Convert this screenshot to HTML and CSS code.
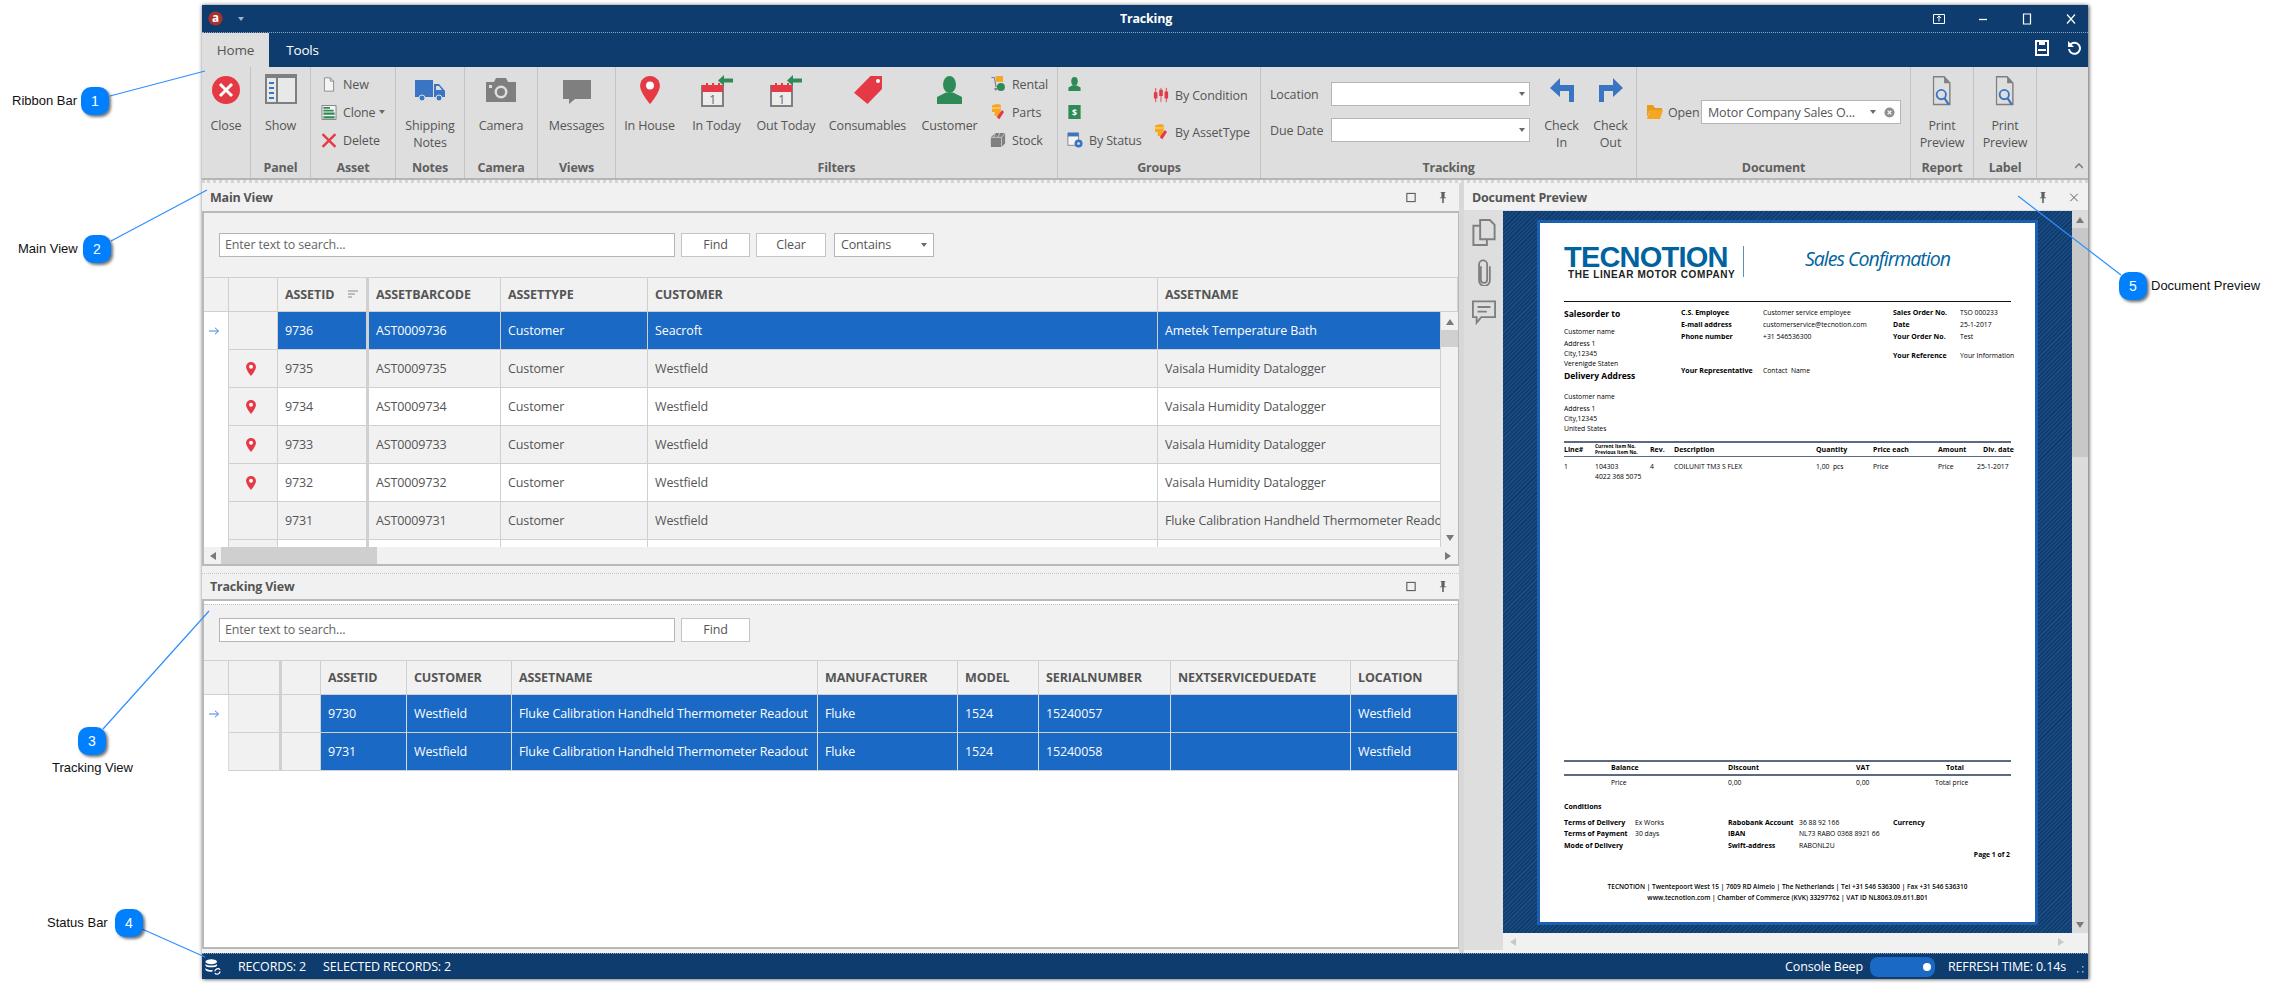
FILE: index.html
```html
<!DOCTYPE html>
<html lang="en">
<head>
<meta charset="utf-8">
<title>Tracking</title>
<link rel="stylesheet" href="styles.css">
</head>
<body>
<svg class="sprite" aria-hidden="true">
  <symbol id="i-pin" viewBox="0 0 24 34"><path d="M12 0C5 0 0 5.400 0 12c0 8 12 22 12 22s12-14 12-22C24 5.400 19 0 12 0z" fill="#e63946"/><circle cx="12" cy="11.500" r="4.800" fill="#fff"/></symbol>
  <symbol id="i-doc-q" viewBox="0 0 26 42"><path d="M1 1h15l8 9v30H1z" fill="none" stroke="#7f7f7f" stroke-width="2"/><path d="M16 1l8 9h-8z" fill="#7f7f7f"/><circle cx="12" cy="26" r="6.500" fill="none" stroke="#3a75c4" stroke-width="2.600"/><path d="M16.500 31l6 9" stroke="#3a75c4" stroke-width="3"/></symbol>
  <symbol id="i-person" viewBox="0 0 25 28"><ellipse cx="12.500" cy="8.500" rx="6.500" ry="8.500" fill="#2e8b57"/><path d="M0 28v-7l9-4.500h7l9 4.500v7z" fill="#2e8b57"/></symbol>
  <symbol id="i-parts" viewBox="0 0 18 24"><path d="M0 2l8-2 5 1v11H0z" fill="#f5a623"/><path d="M0 5h12v2H0z" fill="#ffd27a"/><path d="M4 12h9v6H4z" fill="#f5a623"/><path d="M15 9l3 3-7 11-4-3z" fill="#e63946"/></symbol>
  <symbol id="i-box" viewBox="0 0 12 12"><path d="M1 1h10v10H1z" fill="none" stroke="#606060" stroke-width="1.400"/></symbol>
  <symbol id="i-tack" viewBox="0 0 10 14"><path d="M2 0h6v1H7v6h2v1H6v6H4V8H1V7h2V1H2z" fill="#606060"/></symbol>
</svg>

<div class="label l1">Ribbon Bar</div>
<div class="label l2">Main View</div>
<div class="label l3">Tracking View</div>
<div class="label l4">Status Bar</div>
<div class="label l5">Document Preview</div>

<div class="window">
  <header class="titlebar">
    <div class="tb-left">
      <svg class="logo" viewBox="0 0 18 18"><circle cx="9" cy="9" r="8.500" fill="#a8322d"/><text x="9" y="13.500" class="logo-a">a</text></svg>
      <svg class="caret-w" viewBox="0 0 6 4"><path d="M0 0h6L3 4z" fill="#9fb4cc"/></svg>
    </div>
    <div class="tb-title">Tracking</div>
    <div class="tb-right">
      <svg class="wbtn" viewBox="0 0 12 12"><path d="M.5 1.500h11v9H.5z" fill="none" stroke="#fff"/><path d="M6 2.500v6M4 5l2-2 2 2" fill="none" stroke="#fff"/></svg>
      <svg class="wbtn" viewBox="0 0 12 12"><path d="M2 6.500h8" stroke="#fff" stroke-width="1.300"/></svg>
      <svg class="wbtn" viewBox="0 0 12 12"><path d="M2.500 1h7v10h-7z" fill="none" stroke="#fff" stroke-width="1.200"/></svg>
      <svg class="wbtn" viewBox="0 0 12 12"><path d="M2 1.500l8 9M10 1.500l-8 9" stroke="#fff" stroke-width="1.200"/></svg>
    </div>
  </header>

  <nav class="tabrow">
    <div class="tab active">Home</div>
    <div class="tab">Tools</div>
    <div class="qat">
      <svg class="qat-i" viewBox="0 0 14 16"><path d="M1 1h12v14H1z" fill="none" stroke="#fff" stroke-width="2"/><path d="M4 1h6v4H4zM3 9h8v2H3z" fill="#fff"/></svg>
      <svg class="qat-i" viewBox="0 0 14 16"><path d="M3.500 4.500A5.500 5.500 0 1 1 2 9" fill="none" stroke="#fff" stroke-width="2"/><path d="M1 1v6h6z" fill="#fff"/></svg>
    </div>
  </nav>

  <section class="ribbon">
    <div class="group w-close">
      <div class="g-body">
        <div class="big">
          <svg class="ic28" viewBox="0 0 28 28"><circle cx="14" cy="14" r="14" fill="#e63946"/><path d="M8 8l12 12M20 8L8 20" stroke="#fff" stroke-width="3"/></svg>
          <span>Close</span>
        </div>
      </div>
      <div class="g-cap"></div>
    </div>
    <div class="group w-panel">
      <div class="g-body">
        <div class="big">
          <svg class="ic30" viewBox="0 0 32 30"><path d="M0 0h32v30H0z" fill="#7f7f7f"/><path d="M2 4h9v24H2zM13 4h17v24H13z" fill="#e8e8e8"/><path d="M4 8h5v2H4zM4 13h5v2H4zM4 18h5v2H4zM4 23h5v2H4z" fill="#3a75c4"/></svg>
          <span>Show</span>
        </div>
      </div>
      <div class="g-cap">Panel</div>
    </div>
    <div class="group w-asset">
      <div class="g-body stack asset-stack">
        <div class="small"><svg class="ic-sm" viewBox="0 0 14 18"><path d="M1.500 1h7l4 4v12h-11z" fill="#f4f4f4" stroke="#7f7f7f"/><path d="M8.500 1v4h4" fill="none" stroke="#7f7f7f"/></svg><span>New</span></div>
        <div class="small"><svg class="ic-sm" viewBox="0 0 16 16"><path d="M.5 .5h15v15H.5z" fill="#f4f4f4" stroke="#7f7f7f"/><path d="M2 2h7v2H2zM2 5h11v2H2zM2 8h12v2.500H2zM2 12h12v2.500H2z" fill="#2e8b57"/></svg><span>Clone</span><i class="caret"></i></div>
        <div class="small"><svg class="ic-sm" viewBox="0 0 14 14"><path d="M1 1l12 12M13 1L1 13" stroke="#e63946" stroke-width="2.200"/></svg><span>Delete</span></div>
      </div>
      <div class="g-cap">Asset</div>
    </div>
    <div class="group w-notes">
      <div class="g-body">
        <div class="big">
          <svg class="ic28 wide" viewBox="0 0 30 28"><path d="M0 4h18v17H0zM19 8h5l6 7v6H19z" fill="#3a75c4"/><path d="M21 10h3l3 4h-6z" fill="#dedede"/><circle cx="7" cy="22" r="3" fill="#3a75c4" stroke="#dedede"/><circle cx="24" cy="22" r="3" fill="#3a75c4" stroke="#dedede"/></svg>
          <span>Shipping<br>Notes</span>
        </div>
      </div>
      <div class="g-cap">Notes</div>
    </div>
    <div class="group w-camera">
      <div class="g-body">
        <div class="big">
          <svg class="ic28 wide" viewBox="0 0 30 28"><path d="M0 6h8l2-4h10l2 4h8v20H0z" fill="#7f7f7f"/><circle cx="15" cy="16" r="6.500" fill="#dedede"/><circle cx="15" cy="16" r="4" fill="#7f7f7f"/><path d="M3 9h3v3H3z" fill="#dedede"/></svg>
          <span>Camera</span>
        </div>
      </div>
      <div class="g-cap">Camera</div>
    </div>
    <div class="group w-views">
      <div class="g-body">
        <div class="big">
          <svg class="ic28 wide" viewBox="0 0 30 28"><path d="M1 4h28v19H13l-6 5v-5H1z" fill="#7f7f7f"/></svg>
          <span>Messages</span>
        </div>
      </div>
      <div class="g-cap">Views</div>
    </div>
    <div class="group w-filters">
      <div class="g-body row-body">
        <div class="big b67">
          <svg class="ic28" viewBox="0 0 24 34"><use href="#i-pin"/></svg>
          <span>In House</span>
        </div>
        <div class="big b67">
          <svg class="ic-cal" viewBox="0 0 32 32"><path d="M1 11h21v20H1z" fill="#ececec" stroke="#7f7f7f" stroke-width="2"/><path d="M1 10h21v7H1z" fill="#e63946"/><path d="M5 8h2v5H5zM11 8h2v5h-2zM17 8h2v5h-2z" fill="#e63946"/><text x="11.500" y="29" class="cal-num">1</text><path d="M17 5.500L23 0v3.500h9v4h-9V11z" fill="#2e8b57"/></svg>
          <span>In Today</span>
        </div>
        <div class="big b72">
          <svg class="ic-cal" viewBox="0 0 32 32"><path d="M1 11h21v20H1z" fill="#ececec" stroke="#7f7f7f" stroke-width="2"/><path d="M1 10h21v7H1z" fill="#e63946"/><path d="M5 8h2v5H5zM11 8h2v5h-2zM17 8h2v5h-2z" fill="#e63946"/><text x="11.500" y="29" class="cal-num">1</text><path d="M17 5.500L23 0v3.500h9v4h-9V11z" fill="#2e8b57"/></svg>
          <span>Out Today</span>
        </div>
        <div class="big b91">
          <svg class="ic28" viewBox="0 0 28 28"><path d="M16.500 0H28v13L13.500 28 0 16.700z" fill="#e63946"/><circle cx="24" cy="5" r="2" fill="#fff"/></svg>
          <span>Consumables</span>
        </div>
        <div class="big b73">
          <svg class="ic-p-lg" viewBox="0 0 25 28"><use href="#i-person"/></svg>
          <span>Customer</span>
        </div>
        <div class="stack filter-stack">
          <div class="small"><svg class="ic-xs" viewBox="0 0 18 22"><path d="M0 2h4l2 12h8" fill="none" stroke="#7f7f7f" stroke-width="1.500"/><path d="M6 0h10v8H6z" fill="#f5a623"/><circle cx="13" cy="15" r="5.500" fill="#2e8b57"/><circle cx="6" cy="18" r="2" fill="#7f7f7f"/></svg><span>Rental</span></div>
          <div class="small"><svg class="ic-xs" viewBox="0 0 18 24"><use href="#i-parts"/></svg><span>Parts</span></div>
          <div class="small"><svg class="ic-xs" viewBox="0 0 18 18"><path d="M1 6l5-5h11v12l-4 4H1z" fill="#7f7f7f"/><path d="M1 6h12v11M13 6l4-5M6 1L4 6M11 1L9 6" fill="none" stroke="#dedede" stroke-width=".8"/></svg><span>Stock</span></div>
        </div>
      </div>
      <div class="g-cap">Filters</div>
    </div>
    <div class="group w-groups">
      <div class="g-body groups-body">
        <div class="stack groups-left">
          <div class="small"><svg class="ic-p" viewBox="0 0 25 28"><use href="#i-person"/></svg></div>
          <div class="small"><svg class="ic-p" viewBox="0 0 14 16"><path d="M0 0h14v16H0z" fill="#2e8b57"/><text x="7" y="12" class="dollar">$</text></svg></div>
          <div class="small"><svg class="ic-xs" viewBox="0 0 18 18"><path d="M1 1h12v14H1z" fill="#f4f4f4" stroke="#7f7f7f"/><path d="M1 1h12v4H1z" fill="#3a75c4"/><circle cx="13" cy="13" r="4.500" fill="#3a75c4"/><circle cx="13" cy="13" r="1.600" fill="#dedede"/></svg><span>By Status</span></div>
        </div>
        <div class="stack groups-right">
          <div class="small"><svg class="ic-xs" viewBox="0 0 18 16"><path d="M3 0v16M9 0v16M15 0v16" stroke="#e63946"/><path d="M1 5h4v7H1zM7 2h4v7H7zM13 4h4v8h-4z" fill="#e63946"/></svg><span>By Condition</span></div>
          <div class="small"><svg class="ic-xs" viewBox="0 0 18 24"><use href="#i-parts"/></svg><span>By AssetType</span></div>
        </div>
      </div>
      <div class="g-cap">Groups</div>
    </div>
    <div class="group w-tracking">
      <div class="g-body tracking-body">
        <div class="form">
          <div class="form-row"><span class="form-l">Location</span><div class="combo c-loc"><i class="caret"></i></div></div>
          <div class="form-row"><span class="form-l">Due Date</span><div class="combo c-loc"><i class="caret"></i></div></div>
        </div>
        <div class="big b49">
          <svg class="ic-arrow" viewBox="0 0 24 24"><path d="M10 0L0 10l10 9v-6h9v11h5V7H10z" fill="#3a75c4"/></svg>
          <span>Check<br>In</span>
        </div>
        <div class="big b49">
          <svg class="ic-arrow" viewBox="0 0 24 24"><path d="M14 0l10 10-10 9v-6H5v11H0V7h14z" fill="#3a75c4"/></svg>
          <span>Check<br>Out</span>
        </div>
      </div>
      <div class="g-cap">Tracking</div>
    </div>
    <div class="group w-document">
      <div class="g-body doc-body">
        <svg class="folder" viewBox="0 0 16 14"><path d="M0 0h6l2 3h7v2H3L0 12z" fill="#e89b1a"/><path d="M3 5h13l-3 9H0z" fill="#f5a623"/></svg>
        <span class="open">Open</span>
        <div class="combo c-doc"><span class="c-text">Motor Company Sales O...</span><i class="caret"></i><svg class="clear" viewBox="0 0 12 12"><circle cx="6" cy="6" r="5.500" fill="#8f8f8f"/><path d="M4 4l4 4M8 4l-4 4" stroke="#fff" stroke-width="1.300"/></svg></div>
      </div>
      <div class="g-cap">Document</div>
    </div>
    <div class="group w-report">
      <div class="g-body">
        <div class="big">
          <svg class="ic28 docq" viewBox="0 0 26 42"><use href="#i-doc-q"/></svg>
          <span>Print<br>Preview</span>
        </div>
      </div>
      <div class="g-cap">Report</div>
    </div>
    <div class="group w-label">
      <div class="g-body">
        <div class="big">
          <svg class="ic28 docq" viewBox="0 0 26 42"><use href="#i-doc-q"/></svg>
          <span>Print<br>Preview</span>
        </div>
      </div>
      <div class="g-cap">Label</div>
    </div>
    <div class="ribbon-end">
      <svg class="chev" viewBox="0 0 8 6"><path d="M0 5l4-4 4 4" fill="none" stroke="#7a7a7a" stroke-width="1.500"/></svg>
    </div>
  </section>

  <main class="workspace">
    <div class="left-col">
      <div class="p-head h-main">
        <span class="p-title">Main View</span>
        <div class="p-tools"><svg class="tool" viewBox="0 0 12 12"><use href="#i-box"/></svg><svg class="tool" viewBox="0 0 10 14"><use href="#i-tack"/></svg></div>
      </div>
      <div class="p-body b-main">
        <div class="search s-main">
          <div class="s-input">Enter text to search...</div>
          <div class="s-btn">Find</div>
          <div class="s-btn s-clear">Clear</div>
          <div class="s-combo"><span>Contains</span><i class="caret"></i></div>
        </div>
        <div class="grid-head gm">
          <div class="c"></div><div class="c"></div>
          <div class="c thick sort-cell">ASSETID<svg class="sort" viewBox="0 0 10 9"><path d="M0 1h10M0 4h7M0 7h4" stroke="#8a8a8a" stroke-width="1.200"/></svg></div>
          <div class="c">ASSETBARCODE</div><div class="c">ASSETTYPE</div><div class="c">CUSTOMER</div><div class="c">ASSETNAME</div>
        </div>
        <div class="grid-body">
          <div class="rows">
            <div class="row gm sel"><div class="c ind"><svg class="arrow-r" viewBox="0 0 12 10"><path d="M0 5h10M6.500 1.500L10.500 5l-4 3.500" fill="none" stroke="#2f7fd6" stroke-width="1"/></svg></div><div class="c state"></div><div class="c thick">9736</div><div class="c">AST0009736</div><div class="c">Customer</div><div class="c">Seacroft</div><div class="c">Ametek Temperature Bath</div></div>
            <div class="row gm alt"><div class="c ind"></div><div class="c state"><svg class="row-pin" viewBox="0 0 24 34"><use href="#i-pin"/></svg></div><div class="c thick">9735</div><div class="c">AST0009735</div><div class="c">Customer</div><div class="c">Westfield</div><div class="c">Vaisala Humidity Datalogger</div></div>
            <div class="row gm"><div class="c ind"></div><div class="c state"><svg class="row-pin" viewBox="0 0 24 34"><use href="#i-pin"/></svg></div><div class="c thick">9734</div><div class="c">AST0009734</div><div class="c">Customer</div><div class="c">Westfield</div><div class="c">Vaisala Humidity Datalogger</div></div>
            <div class="row gm alt"><div class="c ind"></div><div class="c state"><svg class="row-pin" viewBox="0 0 24 34"><use href="#i-pin"/></svg></div><div class="c thick">9733</div><div class="c">AST0009733</div><div class="c">Customer</div><div class="c">Westfield</div><div class="c">Vaisala Humidity Datalogger</div></div>
            <div class="row gm"><div class="c ind"></div><div class="c state"><svg class="row-pin" viewBox="0 0 24 34"><use href="#i-pin"/></svg></div><div class="c thick">9732</div><div class="c">AST0009732</div><div class="c">Customer</div><div class="c">Westfield</div><div class="c">Vaisala Humidity Datalogger</div></div>
            <div class="row gm alt"><div class="c ind"></div><div class="c state"></div><div class="c thick">9731</div><div class="c">AST0009731</div><div class="c">Customer</div><div class="c">Westfield</div><div class="c">Fluke Calibration Handheld Thermometer Readout</div></div>
            <div class="row gm"><div class="c ind"></div><div class="c state"></div><div class="c thick"></div><div class="c"></div><div class="c"></div><div class="c"></div><div class="c"></div></div>
          </div>
          <div class="vscroll">
            <svg class="tri" viewBox="0 0 8 6"><path d="M0 6l4-6 4 6z" fill="#7a7a7a"/></svg>
            <div class="v-thumb"></div>
            <svg class="tri tri-end" viewBox="0 0 8 6"><path d="M0 0l4 6 4-6z" fill="#7a7a7a"/></svg>
          </div>
        </div>
        <div class="hscroll">
          <svg class="tri-h" viewBox="0 0 6 8"><path d="M6 0L0 4l6 4z" fill="#7a7a7a"/></svg>
          <div class="h-thumb"></div>
          <svg class="tri-h tri-end-h" viewBox="0 0 6 8"><path d="M0 0l6 4-6 4z" fill="#7a7a7a"/></svg>
        </div>
      </div>
      <div class="p-head h-track">
        <span class="p-title">Tracking View</span>
        <div class="p-tools"><svg class="tool" viewBox="0 0 12 12"><use href="#i-box"/></svg><svg class="tool" viewBox="0 0 10 14"><use href="#i-tack"/></svg></div>
      </div>
      <div class="p-body b-track">
        <div class="search s-track">
          <div class="s-input">Enter text to search...</div>
          <div class="s-btn">Find</div>
        </div>
        <div class="grid-head gt">
          <div class="c"></div><div class="c thick"></div><div class="c"></div>
          <div class="c">ASSETID</div><div class="c">CUSTOMER</div><div class="c">ASSETNAME</div><div class="c">MANUFACTURER</div><div class="c">MODEL</div><div class="c">SERIALNUMBER</div><div class="c">NEXTSERVICEDUEDATE</div><div class="c">LOCATION</div>
        </div>
        <div class="row gt selt"><div class="c ind"><svg class="arrow-r" viewBox="0 0 12 10"><path d="M0 5h10M6.500 1.500L10.500 5l-4 3.500" fill="none" stroke="#2f7fd6" stroke-width="1"/></svg></div><div class="c state thick"></div><div class="c state"></div><div class="c">9730</div><div class="c">Westfield</div><div class="c">Fluke Calibration Handheld Thermometer Readout</div><div class="c">Fluke</div><div class="c">1524</div><div class="c">15240057</div><div class="c"></div><div class="c">Westfield</div></div>
        <div class="row gt selt"><div class="c ind"></div><div class="c state thick"></div><div class="c state"></div><div class="c">9731</div><div class="c">Westfield</div><div class="c">Fluke Calibration Handheld Thermometer Readout</div><div class="c">Fluke</div><div class="c">1524</div><div class="c">15240058</div><div class="c"></div><div class="c">Westfield</div></div>
      </div>
    </div>

    <div class="splitter"></div>

    <div class="right-col">
      <div class="p-head h-doc">
        <span class="p-title">Document Preview</span>
        <div class="p-tools t-doc"><svg class="tool" viewBox="0 0 10 14"><use href="#i-tack"/></svg><svg class="tool" viewBox="0 0 12 12"><path d="M1.500 1.500l9 9M10.500 1.500l-9 9" stroke="#606060" stroke-width="1.200"/></svg></div>
      </div>
      <div class="doc-wrap">
        <aside class="doc-side">
          <svg class="side-i" viewBox="0 0 24 28"><path d="M8 1h10l5 5v15H8z" fill="none" stroke="#7f7f7f" stroke-width="2"/><path d="M8 7H1v20h14v-6" fill="none" stroke="#7f7f7f" stroke-width="2"/></svg>
          <svg class="side-i" viewBox="0 0 16 30"><path d="M4.500 8v15a3.500 3.500 0 0 0 7 0V6a4.500 4.500 0 0 0-9 0v18a6 6 0 0 0 12 0V8" fill="none" stroke="#7f7f7f" stroke-width="2"/></svg>
          <svg class="side-i" viewBox="0 0 26 26"><path d="M1 1h24v17H10l-5 6v-6H1z" fill="none" stroke="#7f7f7f" stroke-width="2"/><path d="M6 7h14M6 12h10" stroke="#7f7f7f" stroke-width="2"/></svg>
        </aside>
        <div class="doc-main">
          <div class="doc-top">
            <div class="doc-stage">
              <article class="page">
                <div class="pg-head">
                  <div class="brand"><div class="brand-name">TECNOTION</div><div class="brand-sub">THE LINEAR MOTOR COMPANY</div></div>
                  <div class="brand-div"></div>
                  <div class="pg-title">Sales Confirmation</div>
                </div>
                <div class="pg-addr">
                  <div class="a-col1">
                    <div class="a-h">Salesorder to</div>
                    <div class="a-l m7">Customer name</div>
                    <div class="a-l m2">Address 1</div>
                    <div class="a-l">City,12345</div>
                    <div class="a-l">Verenigde Staten</div>
                    <div class="a-h">Delivery Address</div>
                    <div class="a-l m10">Customer name</div>
                    <div class="a-l m2">Address 1</div>
                    <div class="a-l">City,12345</div>
                    <div class="a-l">United States</div>
                  </div>
                  <div class="a-col2">
                    <b>C.S. Employee</b><span>Customer service employee</span>
                    <b>E-mail address</b><span>customerservice@tecnotion.com</span>
                    <b>Phone number</b><span>+31 546536300</span>
                    <b class="rep">Your Representative</b><span class="rep">Contact&nbsp; Name</span>
                  </div>
                  <div class="a-col3">
                    <b>Sales Order No.</b><span>TSO 000233</span>
                    <b>Date</b><span>25-1-2017</span>
                    <b>Your Order No.</b><span>Test</span>
                    <b class="ref">Your Reference</b><span class="ref">Your Information</span>
                  </div>
                </div>
                <div class="pg-lines-head">
                  <b>Line#</b>
                  <b class="item-no">Current Item No.<br>Previous Item No.</b>
                  <b>Rev.</b><b>Description</b><b>Quantity</b><b>Price each</b><b>Amount</b><b>Dlv. date</b>
                </div>
                <div class="pg-lines-row">
                  <span>1</span><span>104303<br>4022 368 5075</span><span>4</span><span>COILUNIT TM3 S FLEX</span><span>1,00&nbsp; pcs</span><span>Price</span><span>Price</span><span class="dlv">25-1-2017</span>
                </div>
                <div class="pg-totals-head"><b>Balance</b><b>Discount</b><b>VAT</b><b class="tot">Total</b></div>
                <div class="pg-totals-row"><span>Price</span><span>0,00</span><span>0,00</span><span>Total price</span></div>
                <div class="pg-cond-t">Conditions</div>
                <div class="pg-cond">
                  <b>Terms of Delivery</b><span>Ex Works</span><b>Rabobank Account</b><span>36 88 92 166</span><b>Currency</b>
                  <b>Terms of Payment</b><span>30 days</span><b>IBAN</b><span>NL73 RABO 0368 8921 66</span><i></i>
                  <b>Mode of Delivery</b><span></span><b>Swift-address</b><span>RABONL2U</span><i></i>
                </div>
                <div class="pg-num">Page 1 of 2</div>
                <div class="pg-foot">TECNOTION | Twentepoort West 15 | 7609 RD Almelo | The Netherlands | Tel +31 546 536300 | Fax +31 546 536310<br>www.tecnotion.com | Chamber of Commerce (KVK) 33297762 | VAT ID NL8063.09.611.B01</div>
              </article>
            </div>
            <div class="doc-vscroll">
              <svg class="tri" viewBox="0 0 8 6"><path d="M0 6l4-6 4 6z" fill="#7a7a7a"/></svg>
              <div class="dv-thumb"></div>
              <svg class="tri tri-end" viewBox="0 0 8 6"><path d="M0 0l4 6 4-6z" fill="#7a7a7a"/></svg>
            </div>
          </div>
          <div class="doc-hscroll">
            <svg class="tri-h" viewBox="0 0 6 8"><path d="M6 0L0 4l6 4z" fill="#c8c8c8"/></svg>
            <svg class="tri-h tri-end-h" viewBox="0 0 6 8"><path d="M0 0l6 4-6 4z" fill="#c8c8c8"/></svg>
          </div>
        </div>
      </div>
    </div>
  </main>

  <footer class="status">
    <svg class="db" viewBox="0 0 18 18"><ellipse cx="7" cy="3" rx="6.500" ry="2.800" fill="#fff"/><path d="M.5 5.500c1.500 2.500 11.500 2.500 13 0v2c-1.500 2.500-11.500 2.500-13 0zM.5 10c1.500 2.500 7 2.500 8 2v2c-2 .8-6.500 .5-8-1.500z" fill="#fff"/><path d="M11 14a3.500 3.500 0 0 1 6-2M17 14a3.500 3.500 0 0 1-6 2" fill="none" stroke="#fff" stroke-width="1.300"/></svg>
    <span class="st-a">RECORDS: 2</span>
    <span class="st-b">SELECTED RECORDS: 2</span>
    <span class="st-c">Console Beep</span>
    <div class="toggle"><i></i></div>
    <span class="st-d">REFRESH TIME: 0.14s</span>
    <svg class="grip" viewBox="0 0 8 8"><path d="M6 0h1.500v1.500H6zM6 5h1.500v1.500H6zM1 5h1.500v1.500H1z" fill="#9fb4cc"/></svg>
  </footer>
</div>

<svg class="leaders" viewBox="0 0 2274 992" aria-hidden="true">
  <path d="M110 96L205 71M111 241L207 190M103 729L209 611M142 929L205 957M2018 196L2121 275" stroke="#2f8fff" stroke-width="1.200" fill="none"/>
</svg>
<div class="badge b1">1</div>
<div class="badge b2">2</div>
<div class="badge b3">3</div>
<div class="badge b4">4</div>
<div class="badge b5">5</div>
</body>
</html>
```

FILE: styles.css
```css
* { box-sizing: border-box; }
html, body { margin: 0; padding: 0; }
body { position: relative; width: 2274px; height: 992px; overflow: hidden; background: #fff; font-family: "Open Sans", "Noto Sans", sans-serif; font-size: 13px; color: #555; }
.sprite { position: absolute; width: 0; height: 0; }
svg { display: block; flex: none; }
.label { position: absolute; font-family: "Liberation Sans", sans-serif; font-size: 13px; line-height: 16px; color: #111; white-space: nowrap; }
.l1 { left: 12px; top: 93px; }
.l2 { left: 18px; top: 241px; }
.l3 { left: 52px; top: 760px; }
.l4 { left: 47px; top: 915px; }
.l5 { left: 2151px; top: 278px; }
.badge { position: absolute; width: 28px; height: 28px; border-radius: 10px; background: #0080ff; color: #fff; font-family: "Liberation Sans", sans-serif; font-size: 14px; line-height: 28px; text-align: center; box-shadow: 2px 2px 3px rgba(0,0,0,.55); }
.b1 { left: 81px; top: 87px; }
.b2 { left: 83px; top: 235px; }
.b3 { left: 78px; top: 727px; }
.b4 { left: 115px; top: 909px; }
.b5 { left: 2119px; top: 272px; }
.leaders { position: absolute; left: 0; top: 0; width: 2274px; height: 992px; pointer-events: none; }

.window { position: absolute; left: 202px; top: 5px; width: 1886px; height: 974px; display: flex; flex-direction: column; background: #f1f1f1; box-shadow: 0 0 4px rgba(0,0,0,.45), 2px 1px 3px rgba(0,0,0,.3); }
.titlebar { height: 28px; flex: none; background: #0f3c6e; border-bottom: 1px dotted #8fa6c0; display: flex; align-items: center; position: relative; }
.tb-left { display: flex; align-items: center; padding-left: 6px; gap: 15px; }
.logo { width: 15px; height: 15px; }
.logo-a { font: 700 14px "Open Sans", sans-serif; fill: #fff; text-anchor: middle; }
.caret-w { width: 6px; height: 4px; }
.tb-title { position: absolute; left: 0; right: 0; text-align: center; font-weight: 700; font-size: 12.500px; color: #fff; letter-spacing: -.2px; margin-left: 2px; }
.tb-right { margin-left: auto; display: flex; align-items: center; gap: 32px; padding-right: 11px; }
.wbtn { width: 12px; height: 12px; }

.tabrow { height: 34px; flex: none; background: #0f3c6e; display: flex; align-items: stretch; }
.tab { width: 67px; text-align: center; color: #fff; font-size: 13.500px; line-height: 34px; letter-spacing: -.2px; }
.tab.active { background: #dedede; color: #555; }
.qat { margin-left: auto; display: flex; align-items: center; gap: 18px; padding: 0 7px 4px 0; }
.qat-i { width: 14px; height: 16px; }

.ribbon { height: 113px; flex: none; background: #dedede; border-bottom: 2px solid #b5b5b5; display: flex; }
.group { display: flex; flex-direction: column; border-right: 1px solid #c3c3c3; flex: none; }
.w-close { width: 49px; }
.w-panel { width: 60px; }
.w-asset { width: 85px; }
.w-notes { width: 69px; }
.w-camera { width: 73px; }
.w-views { width: 78px; }
.w-filters { width: 442px; }
.w-groups { width: 203px; }
.w-tracking { width: 376px; }
.w-document { width: 274px; }
.w-report { width: 63px; }
.w-label { width: 63px; }
.ribbon-end { flex: 1; display: flex; align-items: flex-end; justify-content: flex-end; padding: 0 5px 9px 0; }
.chev { width: 8px; height: 6px; }
.g-body { flex: 1; min-height: 0; display: flex; justify-content: center; font-size: 12.500px; letter-spacing: -.15px; color: #555; }
.g-cap { height: 26px; flex: none; text-align: center; font-weight: 700; font-size: 12.500px; line-height: 31px; color: #606060; letter-spacing: -.2px; }
.big { display: flex; flex-direction: column; align-items: center; text-align: center; padding-top: 9px; line-height: 17px; white-space: nowrap; }
.big > span { margin-top: 13px; }
.b67 { width: 67px; }
.b72 { width: 72px; }
.b91 { width: 91px; }
.b73 { width: 73px; }
.b49 { width: 49px; }
.ic28 { width: 28px; height: 28px; }
.ic28.wide { width: 30px; }
.ic30 { width: 32px; height: 30px; margin-top: -2px; }
.ic-cal { width: 32px; height: 32px; margin: -1px 0 -3px; }
.ic-p-lg { width: 25px; height: 28px; }
.ic-p { width: 13px; height: 14px; margin-left: 1px; }
.ic-arrow { width: 24px; height: 24px; margin: 2px 0; }
.ic28.docq { width: 26px; height: 30px; margin-bottom: -2px; }
.stack { display: flex; flex-direction: column; }
.small { display: flex; flex: none; align-items: center; gap: 6px; white-space: nowrap; height: 28px; }
.ic-sm { width: 16px; height: 15px; }
.ic-xs { width: 16px; height: 16px; }
.asset-stack { padding: 3px 0 0 10px; justify-content: flex-start; width: 100%; }
.row-body { justify-content: flex-start; }
.filter-stack { padding: 3px 0 0 4px; }
.groups-body { justify-content: flex-start; padding-top: 3px; }
.groups-left { width: 95px; padding-left: 9px; }
.groups-right { gap: 9px; padding-top: 11px; }
.cal-num { font: 400 12px "Open Sans", sans-serif; fill: #666; text-anchor: middle; }
.dollar { font: 700 10px "Open Sans", sans-serif; fill: #fff; text-anchor: middle; }
.caret { display: inline-block; width: 0; height: 0; border: 3px solid transparent; border-top: 4px solid #6a6a6a; border-bottom: 0; }
.small .caret { margin-left: -2px; }
.tracking-body { justify-content: flex-start; padding-top: 15px; }
.form { width: 276px; display: flex; flex-direction: column; gap: 12px; padding-left: 9px; }
.form-row { display: flex; align-items: center; height: 24px; justify-content: space-between; padding-right: 7px; }
.combo { background: #fff; border: 1px solid #b5b5b5; display: flex; align-items: center; height: 24px; }
.c-loc { width: 199px; justify-content: flex-end; padding-right: 4px; }
.tracking-body .big { margin-top: -15px; }
.doc-body { justify-content: flex-start; align-items: center; padding: 5px 0 0 10px; }
.folder { width: 16px; height: 14px; }
.open { margin-left: 5px; width: 33px; }
.c-doc { width: 200px; padding: 0 5px 0 6px; }
.c-text { flex: 1; color: #555; font-size: 12.500px; white-space: nowrap; overflow: hidden; }
.clear { width: 11px; height: 11px; margin-left: 8px; }

.workspace { flex: 1; min-height: 0; display: flex; border-top: 3px dotted #d5d5d5; }
.left-col { width: 1257px; flex: none; display: flex; flex-direction: column; }
.splitter { width: 5px; flex: none; background: #d8d8d8; }
.right-col { flex: 1; min-width: 0; display: flex; flex-direction: column; }
.p-head { flex: none; display: flex; align-items: center; padding: 0 8px; background: #f1f1f1; }
.p-title { font-weight: 700; font-size: 12.500px; color: #555; letter-spacing: -.2px; }
.h-main { height: 28px; }
.h-track { height: 26px; margin-top: 7px; border-top: 1px dotted #c5c5c5; }
.h-doc { height: 28px; padding-top: 1px; border-bottom: 1px solid #dcdcdc; }
.p-tools { margin-left: auto; display: flex; align-items: center; gap: 22px; padding-right: 3px; }
.t-doc { gap: 21px; padding-right: 1px; }
.tool { width: 10px; height: 11px; }
.p-body { background: #f1f1f1; border: solid #b9b9b9; border-width: 2px 1px 2px 2px; display: flex; flex-direction: column; }
.b-main { height: 355px; }
.b-track { height: 350px; background: #fff; }
.search { flex: none; display: flex; gap: 6px; align-items: center; padding-left: 15px; background: #f1f1f1; }
.s-main { height: 64px; }
.s-track { height: 56px; border-top: 1px dotted #c5c5c5; margin-top: 3px; padding-top: 13px; align-items: flex-start; }
.s-input { width: 456px; height: 24px; background: #fff; border: 1px solid #b5b5b5; padding-left: 5px; line-height: 22px; font-size: 12.500px; letter-spacing: -.15px; color: #666; }
.s-btn { width: 69px; height: 24px; background: #fff; border: 1px solid #c5c5c5; text-align: center; line-height: 22px; font-size: 12.500px; letter-spacing: -.15px; }
.s-clear { width: 70px; }
.s-combo { width: 100px; height: 24px; margin-left: 2px; background: #fff; border: 1px solid #b5b5b5; padding: 0 6px; line-height: 22px; font-size: 12.500px; letter-spacing: -.15px; display: flex; justify-content: space-between; align-items: center; }
.gm { display: grid; grid-template-columns: 25px 49px 91px 132px 147px 510px 1fr; }
.gt { display: grid; grid-template-columns: 25px 53px 39px 86px 105px 306px 140px 81px 132px 180px 1fr; }
.grid-head { height: 35px; flex: none; background: #f1f1f1; border-top: 1px solid #d0d0d0; border-bottom: 1px solid #d0d0d0; font-weight: 700; font-size: 12.500px; letter-spacing: -.1px; color: #555; }
.c { border-right: 1px solid #d0d0d0; padding: 0 7px; display: flex; align-items: center; white-space: nowrap; overflow: hidden; min-width: 0; }
.c.thick { border-right-width: 3px; }
.sort-cell { justify-content: space-between; padding-right: 8px; }
.sort { width: 10px; height: 9px; }
.grid-body { flex: 1; min-height: 0; display: flex; }
.rows { flex: 1; min-width: 0; background: #fff; overflow: hidden; }
.row { height: 38px; border-bottom: 1px solid #d0d0d0; font-size: 12.500px; letter-spacing: -.12px; color: #555; background: #fff; }
.row.alt { background: #f1f1f1; }
.row .ind { background: #fff; border-bottom: 0; margin-bottom: -1px; padding: 0 0 0 5px; }
.row .state { background: #f1f1f1; justify-content: center; padding: 0 4px 0 0; }
.row.sel, .row.selt { background: #1a69c4; color: #fff; }
.selt .c { border-right-color: #d6dbe2; }
.row.selt { border-bottom-color: #d0d0d0; }
.row.selt .state { border-right-color: #d0d0d0; color: #555; }
.row.selt .state.thick { border-right-color: #d0d0d0; }
.row.sel .ind, .row.selt .ind { color: #555; }
.arrow-r { width: 11px; height: 10px; }
.row-pin { width: 10px; height: 14px; }
.vscroll { width: 17px; flex: none; background: #f1f1f1; display: flex; flex-direction: column; align-items: center; padding-top: 7px; }
.tri { width: 8px; height: 6px; flex: none; }
.v-thumb { width: 100%; height: 17px; background: #d0d0d0; margin-top: 5px; }
.tri-end { margin-top: auto; margin-bottom: 6px; }
.hscroll { height: 17px; flex: none; background: #f1f1f1; display: flex; align-items: center; padding: 0 7px 0 6px; }
.tri-h { width: 6px; height: 8px; flex: none; }
.h-thumb { width: 156px; height: 100%; background: #cfcfcf; margin-left: 5px; }
.tri-end-h { margin-left: auto; }
.b-track > .row { border-bottom: 1px solid #d0d0d0; }

.doc-wrap { height: 739px; flex: none; display: flex; }
.doc-side { width: 39px; flex: none; background: #dedede; display: flex; flex-direction: column; align-items: center; gap: 13px; padding-top: 8px; }
.side-i { width: 24px; height: 27px; }
.doc-main { flex: 1; min-width: 0; display: flex; flex-direction: column; }
.doc-top { flex: 1; min-height: 0; display: flex; }
.doc-stage { flex: 1; min-width: 0; background: #0f3c6e repeating-linear-gradient(135deg, #0f3c6e 0, #0f3c6e 1.500px, #1b4a80 1.500px, #1b4a80 3px); display: flex; justify-content: flex-start; padding: 12px 0 0 37px; }
.doc-vscroll { width: 16px; flex: none; background: #dcdcdc; display: flex; flex-direction: column; align-items: center; padding-top: 6px; }
.doc-vscroll .tri { margin-bottom: 5px; }
.dv-thumb { width: 100%; height: 229px; background: #c8c8c8; }
.doc-hscroll { height: 17px; flex: none; background: #f1f1f1; display: flex; align-items: center; padding: 0 24px 0 7px; }

.page { width: 495px; height: 699px; flex: none; background: #fff; box-shadow: 0 0 0 3px #1a5fb0; padding: 0 24px; font-family: "Open Sans", sans-serif; font-size: 6.800px; line-height: 11.750px; color: #000; display: flex; flex-direction: column; }
.page b { font-weight: 700; color: #000; white-space: nowrap; }
.page span { white-space: nowrap; }
.pg-head { height: 79px; flex: none; padding-top: 23px; display: flex; align-items: flex-start; border-bottom: 1px solid #111; }
.brand { width: 179px; flex: none; }
.brand-name { font: 700 29px/22px "Liberation Sans", sans-serif; letter-spacing: -.8px; color: #00639f; white-space: nowrap; }
.brand-sub { font: 700 10px/11px "Liberation Sans", sans-serif; color: #222; padding-left: 4px; margin-top: 1px; letter-spacing: .6px; white-space: nowrap; }
.brand-div { width: 1px; height: 31px; background: #5b93b8; flex: none; }
.pg-title { font: italic 400 19.500px/26px "Open Sans", sans-serif; letter-spacing: -1px; color: #00639f; margin: 0 0 0 61px; white-space: nowrap; }
.pg-addr { height: 139px; flex: none; padding-top: 5px; display: grid; grid-template-columns: 117px 212px 1fr; }
.a-col1 { display: flex; flex-direction: column; }
.a-h { font-weight: 700; font-size: 8.500px; line-height: 13px; color: #000; }
.a-l { line-height: 10px; height: 10px; }
.m7 { margin-top: 7px; }
.m10 { margin-top: 10px; }
.m2 { margin-top: 2px; }
.a-col2 { display: grid; grid-template-columns: 82px 1fr; align-content: start; }
.a-col3 { display: grid; grid-template-columns: 67px 1fr; align-content: start; }
.a-col2 b, .a-col3 b { font-size: 7px; }
.rep { margin-top: 23px; }
.ref { margin-top: 8px; }
.pg-lines-head, .pg-lines-row { display: grid; grid-template-columns: 31px 55px 24px 142px 57px 65px 45px 1fr; }
.pg-lines-head { height: 16px; flex: none; border-top: 2px solid #5c6a82; border-bottom: 1px solid #5c6a82; font-size: 7px; align-items: center; line-height: 6px; }
.item-no { font-size: 4.800px; line-height: 5.500px; }
.pg-lines-row { height: 303px; flex: none; padding-top: 5px; line-height: 10px; }
.dlv { margin-left: -6px; }
.pg-totals-head, .pg-totals-row { display: grid; grid-template-columns: 117px 128px 79px 1fr; padding-left: 47px; }
.pg-totals-head { height: 16px; flex: none; border-top: 2px solid #5c6a82; border-bottom: 2px solid #5c6a82; font-size: 7px; line-height: 12px; }
.tot { padding-left: 11px; }
.pg-totals-row { height: 24px; flex: none; padding-top: 1px; }
.pg-cond-t { font-weight: 700; color: #000; font-size: 7px; margin-top: 1px; }
.pg-cond { display: grid; grid-template-columns: 71px 93px 71px 94px 1fr; margin-top: 4px; line-height: 11.700px; }
.pg-cond b { font-size: 7px; }
.pg-num { text-align: right; font-weight: 700; margin-top: -3px; padding-right: 1px; }
.pg-foot { text-align: center; margin-top: 20px; white-space: nowrap; font-weight: 600; font-size: 6.500px; }

.status { height: 26px; flex: none; background: #0f3c6e; border-top: 1px dotted #8fa6c0; display: flex; align-items: center; color: #fff; font-size: 12.500px; letter-spacing: -.15px; padding-left: 3px; white-space: nowrap; }
.db { width: 16px; height: 16px; }
.st-a { margin-left: 17px; }
.st-b { margin-left: 17px; }
.st-c { margin-left: auto; }
.toggle { width: 65px; height: 20px; border-radius: 8px; background: #1a69c4; margin-left: 7px; position: relative; display: flex; align-items: center; justify-content: flex-end; padding-right: 4px; }
.toggle i { width: 8px; height: 8px; border-radius: 50%; background: #fff; }
.st-d { margin-left: 13px; }
.grip { width: 8px; height: 8px; margin: 6px 4px 0 10px; }
```
